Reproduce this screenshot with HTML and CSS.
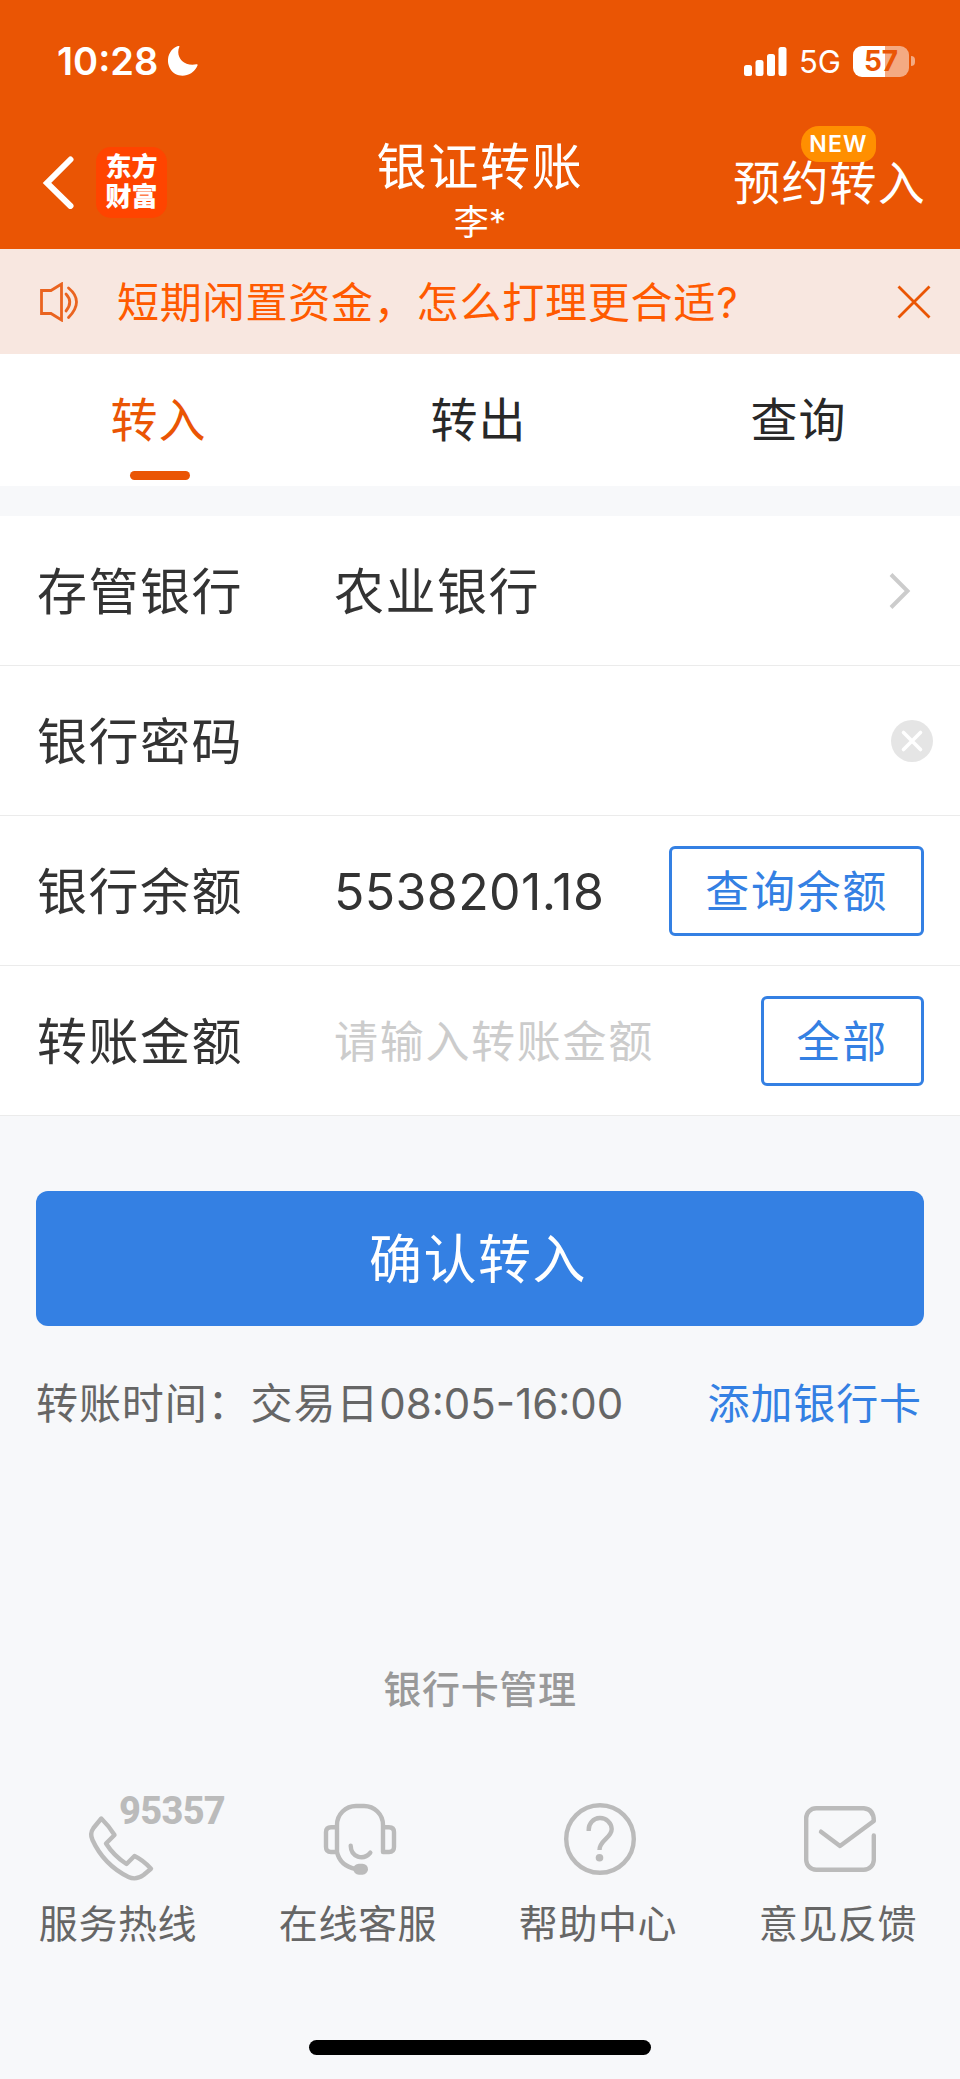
FILE: index.html
```html
<!DOCTYPE html>
<html lang="zh-CN">
<head>
  <meta charset="UTF-8">
  <title>银证转账</title>
  <link rel="stylesheet" href="styles.css">
</head>
<body>

  <header>
    <div class="status-bar">
      <div class="status-left">
        <span class="time">10:28</span>
        <svg class="moon" width="30" height="30" viewBox="0 0 30 30"><path d="M11.5 0.4C7 10 15 21 28.5 18.3Q30 18 29.5 19.5C24 32 8 33 2 22.5C-3.500 12 3 2 10 0Q11.300 -0.200 11.500 0.400Z" fill="#fff"/></svg>
      </div>
      <div class="status-right">
        <svg width="43" height="29" viewBox="0 0 43 29" fill="#fff">
          <rect x="0" y="18" width="8" height="11" rx="2.500"/>
          <rect x="11.500" y="13" width="8" height="16" rx="2.500"/>
          <rect x="23" y="7" width="8" height="22" rx="2.500"/>
          <rect x="34.500" y="0" width="8" height="29" rx="2.500"/>
        </svg>
        <span class="network">5G</span>
        <div class="battery">57</div>
        <div class="battery-tip"></div>
      </div>
    </div>

    <div class="nav-bar">
      <div class="nav-left">
        <svg width="32" height="54" viewBox="0 0 32 54"><path d="M28.500 4.500L5 28L28.500 51" fill="none" stroke="#fff" stroke-width="6" stroke-linecap="round"/></svg>
        <div class="logo"><span>东方</span><span>财富</span></div>
      </div>
      <div class="nav-title">
        <h1>银证转账</h1>
        <p>李*</p>
      </div>
      <div class="nav-right">
        <a>预约转入</a>
        <span class="badge">NEW</span>
      </div>
    </div>
  </header>

  <div class="notice">
    <svg width="40" height="40" viewBox="0 0 40 40" fill="none" stroke="#ea6420" stroke-width="2.800">
      <path d="M2.500 8.500H12L22.500 2V38L12 31.500H2.500Z"/>
      <path d="M27 12Q34.500 20 27 29M29.500 6Q45.500 19 29.500 35.500" stroke-linecap="round"/>
    </svg>
    <p>短期闲置资金，怎么打理更合适?</p>
    <svg width="34" height="34" viewBox="0 0 34 34"><path d="M1.500 1.500L32.500 32.500M32.500 1.500L1.500 32.500" stroke="#ea5504" stroke-width="2.800"/></svg>
  </div>

  <nav class="tabs">
    <a class="active"><span>转入</span></a>
    <a><span>转出</span></a>
    <a><span>查询</span></a>
  </nav>

  <main>
    <div class="form">
      <div class="row">
        <label>存管银行</label>
        <span class="value">农业银行</span>
        <svg class="arrow" width="22" height="38" viewBox="0 0 22 38"><path d="M2 2.500L18.500 19L2 35.500" fill="none" stroke="#ccc" stroke-width="4"/></svg>
      </div>
      <div class="row">
        <label>银行密码</label>
        <span class="value"></span>
        <svg class="clear" width="42" height="42" viewBox="0 0 42 42"><circle cx="21" cy="21" r="21" fill="#e5e5e5"/><path d="M12.500 12.500L29.500 29.500M29.500 12.500L12.500 29.500" stroke="#fff" stroke-width="3.600" stroke-linecap="round"/></svg>
      </div>
      <div class="row">
        <label>银行余额</label>
        <span class="value number">5538201.18</span>
        <button>查询余额</button>
      </div>
      <div class="row">
        <label>转账金额</label>
        <span class="value placeholder">请输入转账金额</span>
        <button>全部</button>
      </div>
    </div>

    <button class="confirm-btn">确认转入</button>

    <div class="tips">
      <span>转账时间：交易日<span class="hours">08:05-16:00</span></span>
      <a>添加银行卡</a>
    </div>
  </main>

  <footer>
    <h2>银行卡管理</h2>
    <div class="services">
      <div class="service">
        <svg width="72" height="72" viewBox="0 0 72 72">
          <path d="M17.300 15.500Q25 23 30.500 32L22 40.500Q30 53 42.500 61L50.500 53Q59 57 67 65.700L59.500 72Q52 77.500 44.500 74Q20 62 8.500 37Q5.500 30.500 9.500 25Z"/>
        </svg>
        <span class="hotline">95357</span>
        <p>服务热线</p>
      </div>
      <div class="service">
        <svg width="72" height="72" viewBox="0 0 72 72">
          <path d="M13 49V22A19 19 0 0 1 32 3H40A19 19 0 0 1 59 22V49H65Q70 49 70 44V29Q70 24.200 65 24.200H59M13 24.200H7Q2 24.200 2 29V44Q2 49 7 49H13Q16 63 32 66"/>
          <path d="M26.700 42.700C27 54 39 58 46.300 49.700"/>
          <rect class="mic" x="29.300" y="60.700" width="14.700" height="11" rx="5.500"/>
        </svg>
        <p>在线客服</p>
      </div>
      <div class="service">
        <svg width="72" height="72" viewBox="0 0 72 72">
          <circle cx="36" cy="36" r="33.800"/>
          <path stroke-linecap="butt" d="M24.700 28V27A11.500 11.500 0 0 1 47.700 26C47.700 35 35.500 37 35.500 47"/>
          <circle class="dot" cx="35.500" cy="54.700" r="3.800"/>
        </svg>
        <p>帮助中心</p>
      </div>
      <div class="service">
        <svg width="72" height="72" viewBox="0 0 72 72">
          <path d="M69.800 32.500V57A10 10 0 0 1 59.800 66.800H12.200A10 10 0 0 1 2.200 57V15A10 10 0 0 1 12.200 5.200H59.800Q69.800 6 69.800 18L36 43L17 28.700"/>
        </svg>
        <p>意见反馈</p>
      </div>
    </div>
    <div class="home-indicator"></div>
  </footer>

</body>
</html>
```

FILE: styles.css
```css
* { box-sizing: border-box; margin: 0; padding: 0; }

body {
  font-family: Inter, "Noto Sans CJK SC", sans-serif;
  width: 960px;
  height: 2079px;
  display: flex;
  flex-direction: column;
  background-color: #f7f8fa;
  color: #333;
}

svg {
  display: block;
  flex-shrink: 0;
}

h1, h2 {
  font-weight: 400;
}

header {
  height: 249px;
  background-color: #ea5504;
  color: white;
}

.status-bar {
  height: 122px;
  padding: 0 45px 0 57px;
  display: flex;
  justify-content: space-between;
  align-items: center;
}

.status-left, .status-right {
  display: flex;
  align-items: center;
}

.time {
  width: 111px;
  font-size: 38px;
  font-weight: 600;
}

.network {
  margin-left: 12px;
  width: 54px;
  font-size: 31px;
}

.battery {
  width: 56px;
  height: 31px;
  border-radius: 9px;
  background: linear-gradient(to right, white 32px, #f4aa82 32px);
  color: #ea5504;
  font-size: 28px;
  font-weight: 700;
  line-height: 31px;
  text-align: center;
}

.battery-tip {
  width: 4px;
  height: 10px;
  margin-left: 2px;
  border-radius: 0 5px 5px 0;
  background-color: #f4aa82;
}

.nav-bar {
  height: 127px;
  padding: 0 34px 0 42px;
  display: grid;
  grid-template-columns: 300px 1fr 300px;
}

.nav-left {
  display: flex;
  align-items: center;
  gap: 22px;
  padding-bottom: 7px;
}

.logo {
  width: 71px;
  height: 71px;
  border-radius: 15px;
  background-color: #ff4400;
  display: flex;
  flex-direction: column;
  align-items: center;
  justify-content: center;
  font-size: 26px;
  font-weight: 900;
  line-height: 30px;
}

.nav-title {
  text-align: center;
}

.nav-title h1 {
  font-size: 50px;
  letter-spacing: 1.7px;
  line-height: 60px;
  margin-top: 15px;
  margin-left: -8px;
}

.nav-title p {
  font-size: 35px;
  line-height: 50px;
  margin-left: -8px;
}

.nav-right {
  position: relative;
  text-align: right;
  font-size: 47px;
  letter-spacing: 1.2px;
  line-height: 60px;
  padding-top: 31px;
}

.badge {
  position: absolute;
  top: 4px;
  right: 50px;
  width: 75px;
  height: 36px;
  border-radius: 18px 14px 14px 18px;
  background-color: #ff8f00;
  font-size: 23px;
  font-weight: 600;
  line-height: 37px;
  text-align: center;
}

.notice {
  height: 105px;
  padding: 0 29px 0 39px;
  background-color: #f8e7e0;
  color: #ff5a00;
  display: flex;
  align-items: center;
}

.notice p {
  flex-grow: 1;
  margin-left: 38px;
  padding-bottom: 5px;
  font-size: 42px;
  letter-spacing: 0.8px;
}

.tabs {
  height: 132px;
  background-color: white;
  display: grid;
  grid-template-columns: repeat(3, 1fr);
  color: #282828;
}

.tabs a {
  display: flex;
  flex-direction: column;
  align-items: center;
  font-size: 47px;
  letter-spacing: 1px;
  line-height: 117px;
  padding-top: 7px;
  height: 132px;
}

.tabs span {
  margin-left: -3px;
}

.tabs .active {
  color: #ea5504;
}

.tabs .active::after {
  content: "";
  width: 60px;
  height: 9px;
  border-radius: 5px;
  background-color: #ea5504;
  margin-top: -7px;
}

.form {
  margin-top: 30px;
  background-color: white;
}

.row {
  height: 150px;
  padding: 0 36px;
  border-bottom: 1px solid #ebebeb;
  display: flex;
  align-items: center;
  font-size: 50px;
}

.row label {
  width: 297px;
  padding-left: 1px;
  padding-bottom: 5px;
  letter-spacing: 1.5px;
}

.value {
  flex-grow: 1;
  padding-left: 1px;
  padding-bottom: 5px;
  letter-spacing: 1.5px;
}

.number {
  padding-top: 2px;
  padding-bottom: 0;
  letter-spacing: 0.4px;
}

.placeholder {
  padding-bottom: 4px;
  font-size: 44px;
  letter-spacing: 1.7px;
  color: #ccc;
}

.arrow {
  margin-right: 13px;
}

.clear {
  margin-right: -9px;
}

button {
  font-family: inherit;
}

.row button {
  height: 90px;
  padding: 0 33px 4px;
  border: 3px solid #3480e3;
  border-radius: 6px;
  background-color: white;
  color: #3480e3;
  font-size: 44px;
  letter-spacing: 1.7px;
}

.confirm-btn {
  display: block;
  width: 888px;
  height: 135px;
  margin: 75px 36px 0;
  padding: 0 4px 5px 0;
  border: none;
  border-radius: 12px;
  background-color: #3480e3;
  color: white;
  font-size: 53px;
  letter-spacing: 1.5px;
}

.tips {
  margin-top: 48px;
  padding: 0 38px 0 36px;
  display: flex;
  justify-content: space-between;
  font-size: 42px;
  letter-spacing: 0.9px;
  line-height: 60px;
  color: #666;
}

.hours {
  letter-spacing: 0;
}

.tips a {
  color: #3480e3;
}

footer {
  margin-top: auto;
  height: 430px;
  display: flex;
  flex-direction: column;
}

footer h2 {
  font-size: 38px;
  font-weight: 500;
  letter-spacing: 0.7px;
  line-height: 60px;
  margin-top: 10px;
  text-align: center;
  color: #999;
}

.services {
  display: grid;
  grid-template-columns: repeat(4, 1fr);
  margin-top: 84px;
}

.service {
  position: relative;
  display: flex;
  flex-direction: column;
  align-items: center;
  font-size: 39px;
  letter-spacing: 0.6px;
  line-height: 60px;
  color: #666;
}

.service p {
  margin-top: 19px;
  margin-left: -4px;
}

.service svg {
  overflow: visible;
  fill: none;
  stroke: #bbb;
  stroke-width: 4.4;
  stroke-linecap: round;
  stroke-linejoin: round;
}

.service .mic, .service .dot {
  fill: #bbb;
  stroke: none;
}

.hotline {
  position: absolute;
  left: 119px;
  top: -8px;
  font-family: Roboto, sans-serif;
  font-size: 38px;
  font-weight: 800;
  letter-spacing: -0.7px;
  line-height: 32px;
  color: #bbb;
}

.home-indicator {
  width: 342px;
  height: 15px;
  margin: auto auto 24px;
  border-radius: 8px;
  background-color: black;
}
```
